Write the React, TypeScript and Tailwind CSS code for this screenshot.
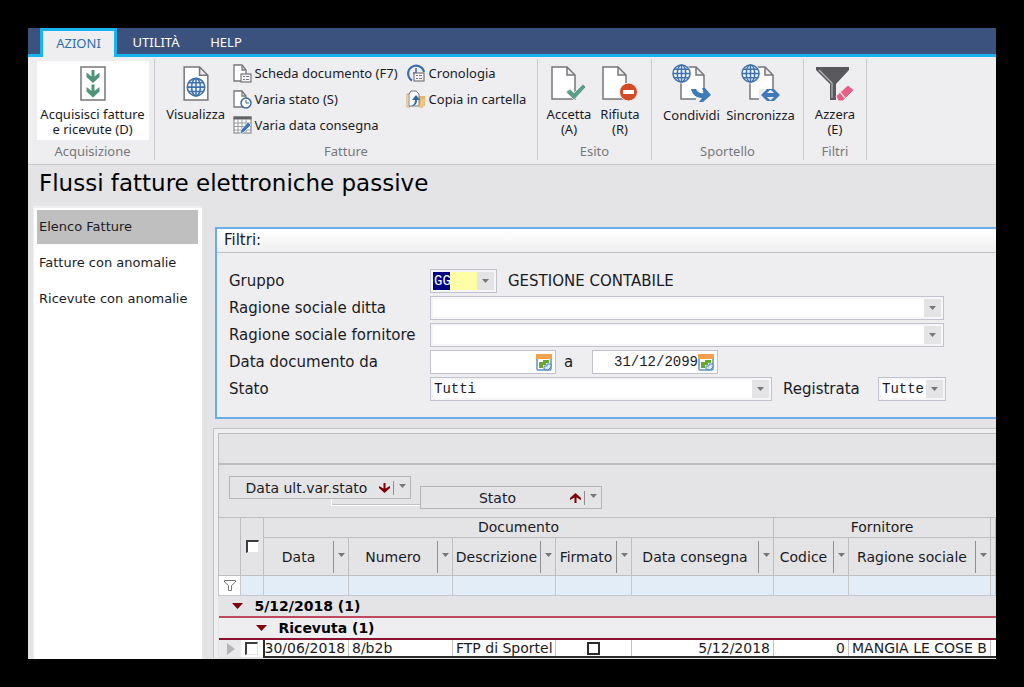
import type { ReactNode } from "react";
import clsx from "clsx";

const menu = ["Elenco Fatture", "Fatture con anomalie", "Ricevute con anomalie"];

const columns = [
  { label: "Data", value: "30/06/2018" },
  { label: "Numero", value: "8/b2b" },
  { label: "Descrizione", value: "FTP di Sportel" },
  { label: "Firmato", value: "" },
  { label: "Data consegna", value: "5/12/2018", right: true },
  { label: "Codice", value: "0", right: true },
  { label: "Ragione sociale", value: "MANGIA LE COSE B" },
];

export default function App() {
  return (
    <div className="min-h-screen bg-black p-7 flex font-['DejaVu_Sans',Verdana,sans-serif] text-[#1b1b1f]">
      <div className="flex-1 min-w-0 flex flex-col overflow-hidden bg-[#e4e4e7]">
        <Tabs />
        <Ribbon />
        <h1 className="pl-[11px] text-[23px] leading-[36px] text-black">Flussi fatture elettroniche passive</h1>
        <div className="flex-1 flex min-h-0 pt-[5px]">
          <Sidebar />
          <main className="flex-1 min-w-0 pl-3">
            <Filters />
            <Invoices />
          </main>
        </div>
      </div>
    </div>
  );
}

const Tabs = () => (
  <nav className="flex h-[29px] pl-3 bg-[#3b527f] border-b-[3px] border-[#19b4ef] font-['Noto_Sans','Open_Sans',sans-serif] text-[13px] text-white">
    <button className="h-[29px] w-[77px] shrink-0 bg-[#eeeef1] border-[3px] border-b-0 border-[#19b4ef] text-[#2f6cab]">AZIONI</button>
    <button className="h-[26px] w-[78px] pt-[3px]">UTILITÀ</button>
    <button className="h-[26px] w-[62px] pt-[3px]">HELP</button>
  </nav>
);

const Ribbon = () => (
  <div className="flex h-[108px] pt-[2px] bg-[#eeeef1] border-b border-[#c6c6ca] font-['Noto_Sans','Open_Sans',sans-serif] text-[13px] leading-[15px]">
    <Group title="Acquisizione" className="w-[127px] pl-[3px]">
      <BigButton icon={<ReceiveIcon />} className="w-[112px] h-[79px] bg-white mt-[2px] pt-[5px]">
        Acquisisci fatture<br />e ricevute (D)
      </BigButton>
    </Group>
    <Group title="Fatture" className="w-[383px]">
      <BigButton icon={<WebDocIcon />} className="w-[74px] pt-[7px]">Visualizza</BigButton>
      <div className="flex flex-col gap-[6px] pt-1">
        <SmallButton icon={<CardDocIcon />}>Scheda documento (F7)</SmallButton>
        <SmallButton icon={<ClockDocIcon />}>Varia stato (S)</SmallButton>
        <SmallButton icon={<CalendarEditIcon />}>Varia data consegna</SmallButton>
      </div>
      <div className="flex flex-col gap-[6px] pt-1 pl-2 pr-[7px]">
        <SmallButton icon={<HistoryIcon />}>Cronologia</SmallButton>
        <SmallButton icon={<FolderCopyIcon />}>Copia in cartella</SmallButton>
      </div>
    </Group>
    <Group title="Esito" className="w-[114px]">
      <BigButton icon={<AcceptIcon />} className="w-[51px] pt-[7px]">Accetta<br />(A)</BigButton>
      <BigButton icon={<RejectIcon />} className="w-[51px] pt-[7px]">Rifiuta<br />(R)</BigButton>
    </Group>
    <Group title="Sportello" className="w-[152px]">
      <BigButton icon={<ShareIcon />} className="w-[66px] pt-[5px]">Condividi</BigButton>
      <BigButton icon={<SyncIcon />} className="w-[72px] pt-[5px]">Sincronizza</BigButton>
    </Group>
    <Group title="Filtri" className="w-[63px]">
      <BigButton icon={<ClearFilterIcon />} className="w-[54px] pt-[7px]">Azzera<br />(E)</BigButton>
    </Group>
  </div>
);

const Group = ({ title, className, children }: { title: string; className: string; children: ReactNode }) => (
  <section className={clsx("shrink-0 h-[101px] flex flex-col border-r border-[#c9c9ce]", className)}>
    <div className="flex-1 flex justify-center items-start">{children}</div>
    <h2 className="text-center text-[#77777c] leading-[18px]">{title}</h2>
  </section>
);

const BigButton = ({ icon, className, children }: { icon: ReactNode; className: string; children: ReactNode }) => (
  <button className={clsx("flex flex-col items-center gap-[6px] whitespace-nowrap", className)}>
    {icon}
    <span>{children}</span>
  </button>
);

const SmallButton = ({ icon, children }: { icon: ReactNode; children: ReactNode }) => (
  <button className="flex items-center gap-[3px] h-5 whitespace-nowrap">
    {icon}
    <span>{children}</span>
  </button>
);

const Sidebar = () => (
  <aside className="w-[169px] shrink-0 ml-[5px] bg-white border-t-2 border-l border-[#efeff1] pt-[2px] pl-[3px] pr-[4px]">
    {menu.map((item, i) => (
      <a
        key={item}
        href="#"
        className={clsx("block h-[34px] mb-[2px] pl-[2px] text-[13px] leading-[34px] whitespace-nowrap", i === 0 && "bg-[#bfbfbf]")}
      >
        {item}
      </a>
    ))}
  </aside>
);

const Filters = () => (
  <section className="mt-[21px] ml-[1px] border-2 border-r-0 border-[#69aeea] bg-[#eeeef1]">
    <h2 className="h-6 pl-[7px] text-[15px] leading-[22px] bg-gradient-to-b from-white to-[#efeff0] border-b border-[#c3c3c6]">Filtri:</h2>
    <div className="flex flex-col gap-[3px] pl-3 pt-4 pb-4 text-[15px]">
      <Row id="gruppo" label="Gruppo">
        <Combo id="gruppo" value="GG" className="w-[67px]" selectClass="bg-[linear-gradient(90deg,#000080_17px,#ffffa6_17px)] text-white" />
        <span className="pl-[11px]">GESTIONE CONTABILE</span>
      </Row>
      <Row id="ditta" label="Ragione sociale ditta">
        <Combo id="ditta" value="" className="w-full max-w-[514px]" />
      </Row>
      <Row id="fornitore" label="Ragione sociale fornitore">
        <Combo id="fornitore" value="" className="w-full max-w-[514px]" />
      </Row>
      <Row id="data-da" label="Data documento da">
        <DateField id="data-da" value="" />
        <label htmlFor="data-a" className="w-9 pl-2">a</label>
        <DateField id="data-a" value="31/12/2099" />
      </Row>
      <Row id="stato" label="Stato">
        <Combo id="stato" value="Tutti" className="w-full max-w-[342px]" />
        <label htmlFor="registrata" className="w-[106px] shrink-0 pl-[11px]">Registrata</label>
        <Combo id="registrata" value="Tutte" className="w-[68px] shrink-0" />
      </Row>
    </div>
  </section>
);

const Row = ({ id, label, children }: { id: string; label: string; children: ReactNode }) => (
  <div className="flex items-center h-6">
    <label htmlFor={id} className="w-[201px] shrink-0 whitespace-nowrap">{label}</label>
    {children}
  </div>
);

const Combo = ({ id, value, className, selectClass = "bg-white" }: { id: string; value: string; className: string; selectClass?: string }) => (
  <div className={clsx("grid h-6 border border-[#c2c2cd] bg-[#f6f6f8] p-[2px]", className)}>
    <select
      id={id}
      defaultValue={value}
      className={clsx("col-start-1 row-start-1 w-full appearance-none pl-px font-['Liberation_Mono',monospace] text-[14px] leading-[18px] outline-none", selectClass)}
    >
      <option>{value}</option>
    </select>
    <span className="col-start-1 row-start-1 justify-self-end w-[17px] bg-[#e4e4e7] flex items-center justify-center pointer-events-none">
      <Caret />
    </span>
  </div>
);

const DateField = ({ id, value }: { id: string; value: string }) => (
  <div className="flex items-center h-6 w-[126px] bg-white border border-[#c2c2cd] pr-[2px]">
    <input id={id} defaultValue={value} className="flex-1 min-w-0 text-right font-['Liberation_Mono',monospace] text-[14px] outline-none" />
    <button aria-label="Calendario" className="w-[17px] shrink-0">
      <svg width="17" height="17" viewBox="0 0 17 17">
        <rect x="1" y="1" width="14" height="15" rx="1" fill="#fff" stroke="#5794c7" strokeWidth="1.5" />
        <path d="M0 0h16v5H0z" fill="#f5a04c" />
        <path d="M3 11V8h4V6h6v3h-3v2H7v3H3z" fill="#68a832" />
        <path d="M8 15v-3h3v-2h4v3l-3 3z" fill="#d9e9f7" stroke="#4d89bd" />
      </svg>
    </button>
  </div>
);

const Caret = () => (
  <svg width="7" height="4" viewBox="0 0 7 4" className="shrink-0"><path d="M0 0h7L3.500 4z" fill="#77777b" /></svg>
);

const Invoices = () => (
  <section className="mt-[9px] -ml-px border border-r-0 border-b-0 border-[#c2c2c6] bg-[#efeff1] pt-1 pl-1">
    <div className="h-8 bg-[#e4e4e7] border-t border-l border-b-2 border-[#bcbcc0]"></div>
    <div className="flex items-start h-[52px] pt-[11px] pl-[10px] bg-[#e4e4e7] border-l border-[#bcbcc0]">
      <Chip label="Data ult.var.stato" down />
      <div className="self-end w-[9px] mb-[11px] flex justify-end">
        <div className="w-[89px] h-[7px] shrink-0 border-l border-b border-white shadow-[inset_0_-1px_#c3c3c7]"></div>
      </div>
      <div className="pt-[10px]"><Chip label="Stato" /></div>
    </div>
    <Grid />
  </section>
);

const Chip = ({ label, down }: { label: string; down?: boolean }) => (
  <button className="flex items-center w-[182px] h-[23px] pl-3 border border-[#b4b4b9] bg-[#e4e4e7] text-[14px] whitespace-nowrap">
    <span className="flex-1 text-center pt-[2px]">{label}</span>
    <svg width="11" height="10" viewBox="0 0 11 10" className={clsx("ml-2 shrink-0", down && "rotate-180")}>
      <path d="M5.500 0L11 5v2L6.500 4.500V10h-2V4.500L0 7V5z" fill="#7e0008" />
    </svg>
    <span className="ml-[3px] pl-[5px] w-[17px] h-[14px] border-l border-[#8f8f94] pt-[3px]"><Caret /></span>
  </button>
);

const Check = ({ label }: { label: string }) => (
  <input
    type="checkbox"
    aria-label={label}
    className="block mx-auto size-[13px] appearance-none bg-white border-t-2 border-l-2 border-r border-b border-t-[#3d3d3d] border-l-[#3d3d3d] border-r-[#e4e4e4] border-b-[#e4e4e4]"
  />
);

const HeaderCell = ({ label }: { label: string }) => (
  <th className="border border-[#bebec2] p-0 font-normal">
    <div className="flex items-center h-[37px] whitespace-nowrap">
      <span className="flex-1 min-w-0 flex justify-center pt-px">{label}</span>
      <span className="w-[15px] h-8 shrink-0 border-l border-[#8f8f94] flex items-center justify-center pb-1"><Caret /></span>
    </div>
  </th>
);

const Grid = () => (
  <table className="w-full table-fixed border-collapse text-[14px] bg-[#e4e4e7]">
    <colgroup>
      <col className="w-[22px]" />
      <col className="w-[23px]" />
      <col className="w-[85px]" />
      <col className="w-[104px]" />
      <col className="w-[103px]" />
      <col className="w-[76px]" />
      <col className="w-[142px]" />
      <col className="w-[75px]" />
      <col className="w-[142px]" />
      <col />
    </colgroup>
    <thead>
      <tr className="h-5">
        <th rowSpan={2} className="border border-[#bebec2]"></th>
        <th rowSpan={2} className="border border-[#bebec2] p-0"><Check label="Seleziona tutto" /></th>
        <th colSpan={5} className="border border-[#bebec2] p-0 font-normal leading-[19px]">Documento</th>
        <th colSpan={2} className="border border-[#bebec2] p-0 font-normal leading-[19px]">Fornitore</th>
        <th className="border border-[#bebec2] p-0"></th>
      </tr>
      <tr>
        {columns.map((c) => <HeaderCell key={c.label} label={c.label} />)}
        <th className="border border-[#bebec2] p-0"></th>
      </tr>
    </thead>
    <tbody>
      <tr className="h-5 bg-[#e3edf7]">
        <td className="border border-[#c3c7cc] p-0 bg-white">
          <svg width="12" height="11" viewBox="0 0 12 11" className="mx-auto"><path d="M.5.5h11v1.500L7.500 5.500v5h-3v-5L.5 2z" fill="none" stroke="#77777b" /></svg>
        </td>
        {Array.from({ length: 9 }, (_, i) => <td key={i} className="border border-[#c3c7cc] p-0"></td>)}
      </tr>
      <tr>
        <td colSpan={10} className="p-0 pl-[13px] border-b-2 border-[#bf4a60]">
          <GroupLabel>5/12/2018 (1)</GroupLabel>
        </td>
      </tr>
      <tr className="bg-[#eeeef1]">
        <td colSpan={10} className="p-0 pl-[37px] border-b-2 border-[#8c1230]">
          <GroupLabel>Ricevuta (1)</GroupLabel>
        </td>
      </tr>
      <tr className="h-[18px] bg-white leading-[15px] whitespace-nowrap">
        <td className="p-0 bg-[#e9e9ec]">
          <svg width="8" height="12" viewBox="0 0 8 12" className="ml-2"><path d="M0 0l8 6-8 6z" fill="#b5b5b9" /></svg>
        </td>
        <td className="p-0 border-r-2 border-r-[#2b2b2b]"><Check label="Seleziona fattura" /></td>
        {columns.map((c) => (
          <td
            key={c.label}
            className={clsx("p-0 px-[3px] overflow-hidden border-y-2 border-y-[#2b2b2b] border-r border-r-[#c3c3c7]", c.right && "text-right", c.label === "Data" && "pl-0")}
          >
            {c.label === "Firmato" ? (
              <input type="checkbox" aria-label="Firmato" className="block mx-auto size-[13px] appearance-none bg-white border-2 border-[#2b2b2b]" />
            ) : c.value}
          </td>
        ))}
        <td className="p-0 border-y-2 border-y-[#2b2b2b]"></td>
      </tr>
    </tbody>
  </table>
);

const GroupLabel = ({ children }: { children: ReactNode }) => (
  <button className="flex items-center gap-3 h-5 font-bold text-black">
    <svg width="11" height="6" viewBox="0 0 11 6"><path d="M0 0h11L5.500 6z" fill="#7e0008" /></svg>
    {children}
  </button>
);

// ribbon icons

const Page = () => (
  <path d="M1 1h15l8 8v24H1zM16 1v8h8" fill="#fff" stroke="#77777b" strokeWidth="1.500" />
);

const Globe = ({ x, y, r }: { x: number; y: number; r: number }) => (
  <g transform={`translate(${x} ${y}) scale(${r / 9})`} fill="#f4f7fb" stroke="#3f72ad" strokeWidth="1.600">
    <circle r="9" />
    <ellipse rx="4.500" ry="9" fill="none" />
    <path d="M0-9V9M-9 0H9M-8-4.500H8M-8 4.500H8" />
  </g>
);

const ReceiveIcon = () => (
  <svg width="26" height="35" viewBox="0 0 26 35">
    <rect x="1" y="1" width="24" height="33" fill="#fff" stroke="#77777b" strokeWidth="1.500" />
    <g fill="#4f9479">
      <path d="M11.500 4h3v6.500l5-4V11L13 17l-6.500-6V6.500l5 4z" />
      <path d="M11.500 18.500h3V25l5-4v4.500l-6.500 6-6.500-6V21l5 4z" />
    </g>
  </svg>
);

const WebDocIcon = () => (
  <svg width="26" height="35" viewBox="0 0 25 34"><Page /><Globe x={12.5} y={20.5} r={8.5} /></svg>
);

const SmallPage = () => (
  <path d="M1 1h8l4 5v11H1zM9 1v5h4" fill="#fff" stroke="#77777b" strokeWidth="1.300" />
);

const SmallCard = () => (
  <g>
    <rect x="8" y="10" width="10" height="8" fill="#f5f5f7" stroke="#77777b" strokeWidth="1.200" />
    <path d="M10 12.500h2M13 12.500h3M10 15.500h2M13 15.500h3" stroke="#77777b" />
  </g>
);

const CardDocIcon = () => (
  <svg width="19" height="19" viewBox="0 0 19 19"><SmallPage /><SmallCard /></svg>
);

const ClockDocIcon = () => (
  <svg width="19" height="19" viewBox="0 0 19 19">
    <SmallPage />
    <circle cx="13" cy="13" r="5" fill="#f5f7fa" stroke="#3f6791" strokeWidth="1.500" />
    <path d="M13 10v3h3" fill="none" stroke="#3f6791" />
  </svg>
);

const CalendarEditIcon = () => (
  <svg width="19" height="19" viewBox="0 0 19 19">
    <rect x="1" y="1" width="17" height="16" fill="#fff" stroke="#77777b" />
    <path d="M.5.5h18v3H.5z" fill="#626267" />
    <path d="M1 7h17M1 10.500h17M1 14h17M5 3v14M9 3v14M13 3v14" stroke="#9b9b9f" />
    <path d="M7 18l1-4 7-8 3 3-7 7z" fill="#3c78b4" stroke="#fff" strokeWidth=".6" />
  </svg>
);

const HistoryIcon = () => (
  <svg width="20" height="20" viewBox="0 0 20 20">
    <path d="M6 17.500A8 8 0 1 1 18 9" fill="none" stroke="#3b70ac" strokeWidth="2.200" />
    <path d="M10 5v5H7" fill="none" stroke="#3b70ac" strokeWidth="1.500" />
    <SmallCard />
  </svg>
);

const FolderCopyIcon = () => (
  <svg width="20" height="19" viewBox="0 0 20 19">
    <path d="M8 4h4l1 2h6v10H8z" fill="#e6b469" />
    <path d="M1 4h3v13H1z" fill="#fff" stroke="#d9a24f" />
    <path d="M5 1h5l3 3v12H3V4z" fill="#fff" stroke="#77777b" />
    <path d="M5 16c3-1 4-3 4-6H6l4-5 4 5h-3c0 4-2 6-6 6z" fill="#3167a6" />
    <path d="M13 18l2-9h5l-3 9z" fill="#eec583" />
  </svg>
);

const AcceptIcon = () => (
  <svg width="36" height="35" viewBox="0 0 36 35">
    <Page />
    <path d="M15 26l4-3 4 4 9-9 3 3-12 13z" fill="#5c9f86" stroke="#eeeef1" strokeWidth=".8" />
  </svg>
);

const RejectIcon = () => (
  <svg width="36" height="35" viewBox="0 0 36 35">
    <Page />
    <circle cx="26.500" cy="26" r="9" fill="#d44c26" stroke="#eeeef1" />
    <path d="M21 24h11v4H21z" fill="#fff" />
  </svg>
);

const ShareIcon = () => (
  <svg width="40" height="38" viewBox="0 0 40 38">
    <g transform="translate(8 2)"><Page /></g>
    <circle cx="9.500" cy="9.500" r="10" fill="#eeeef1" />
    <Globe x={9.5} y={9.5} r={8.500} />
    <path d="M24 31h10v6H24z" fill="#eeeef1" />
    <path d="M19 25h5c2 4 5 5 8 4l-2-5h3l6 7-8 7h-4l3-4c-6 0-10-4-11-9z" fill="#3f79b9" />
  </svg>
);

const SyncIcon = () => (
  <svg width="40" height="38" viewBox="0 0 40 38">
    <g transform="translate(8 2)"><Page /></g>
    <circle cx="9.500" cy="9.500" r="10" fill="#eeeef1" />
    <Globe x={9.5} y={9.5} r={8.500} />
    <path d="M18 25h17v12H18z" fill="#eeeef1" />
    <path d="M20 31l6-6h4l-4 4h7l-4-4h4l6 6-6 6h-4l4-4h-7l4 4h-4z" fill="#3f79b9" />
  </svg>
);

const ClearFilterIcon = () => (
  <svg width="38" height="35" viewBox="0 0 38 35">
    <path d="M0 1h33v3L20 18v16h-6V18L0 4z" fill="#59595d" />
    <path d="M3 4l13 13v15" fill="none" stroke="#b9b9bd" strokeWidth="1.200" />
    <path d="M20 30l12-11 6 5-11 11h-5z" fill="#e55f86" stroke="#eeeef1" />
    <path d="M24 26l5 6" stroke="#f9d3de" strokeWidth="1.500" />
  </svg>
);
